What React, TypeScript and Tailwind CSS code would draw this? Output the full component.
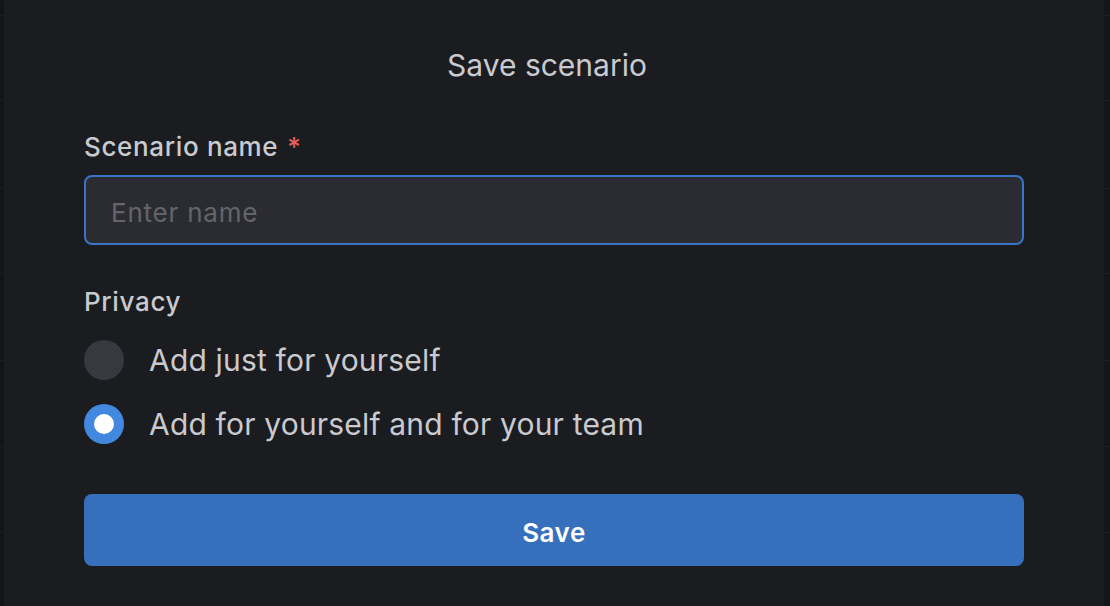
export default function App() {
  const lines = [15, 100, 188, 273, 360, 446, 532];
  return (
    <div className="relative w-[1110px] h-[606px] bg-[#141518] overflow-hidden" style={{ fontFamily: "Inter, 'Noto Sans', sans-serif" }}>
      {lines.map((y) => (
        <div key={y} className="absolute left-0 right-0 h-px bg-[#1e1f23]" style={{ top: y }} />
      ))}
      <div className="absolute left-[4px] right-[6px] top-0 bottom-0 bg-[#1b1c20] px-[80px] pt-[46px] flex flex-col">
        <h1 className="text-center text-[30px] leading-[38px] text-[#c9cacf] font-normal -ml-[14px]">Save scenario</h1>
        <label className="mt-[46px] text-[26px] leading-[34px] tracking-[0.025em] text-[#c9cacf] font-medium">
          Scenario name<span className="ml-[9px] text-[#e5615c]">*</span>
        </label>
        <div className="mt-[11px] h-[70px] rounded-[8px] border-2 border-[#3875c6] bg-[#2b2c32] flex items-center px-[25px] pt-[4px]">
          <span className="text-[26px] tracking-[0.03em] text-[#64656b]">Enter name</span>
        </div>
        <div className="mt-[40px] text-[26px] leading-[34px] tracking-[0.025em] text-[#c9cacf] font-medium">Privacy</div>
        <div className="mt-[21px] flex flex-col gap-[24px]">
          <div className="flex items-center gap-[25px]">
            <div className="w-[40px] h-[40px] rounded-full bg-[#38393f]" />
            <span className="text-[30px] leading-[40px] tracking-[0.006em] text-[#c9cacf]">Add just for yourself</span>
          </div>
          <div className="flex items-center gap-[25px]">
            <div className="w-[40px] h-[40px] rounded-full bg-[#4388df] flex items-center justify-center">
              <div className="w-[20px] h-[20px] rounded-full bg-white" />
            </div>
            <span className="text-[30px] leading-[40px] tracking-[0.006em] text-[#c9cacf]">Add for yourself and for your team</span>
          </div>
        </div>
        <button className="mt-[50px] h-[72px] rounded-[8px] bg-[#3670bd] text-white text-[26px] tracking-[0.02em] font-semibold pt-[4px]">Save</button>
      </div>
    </div>
  );
}
